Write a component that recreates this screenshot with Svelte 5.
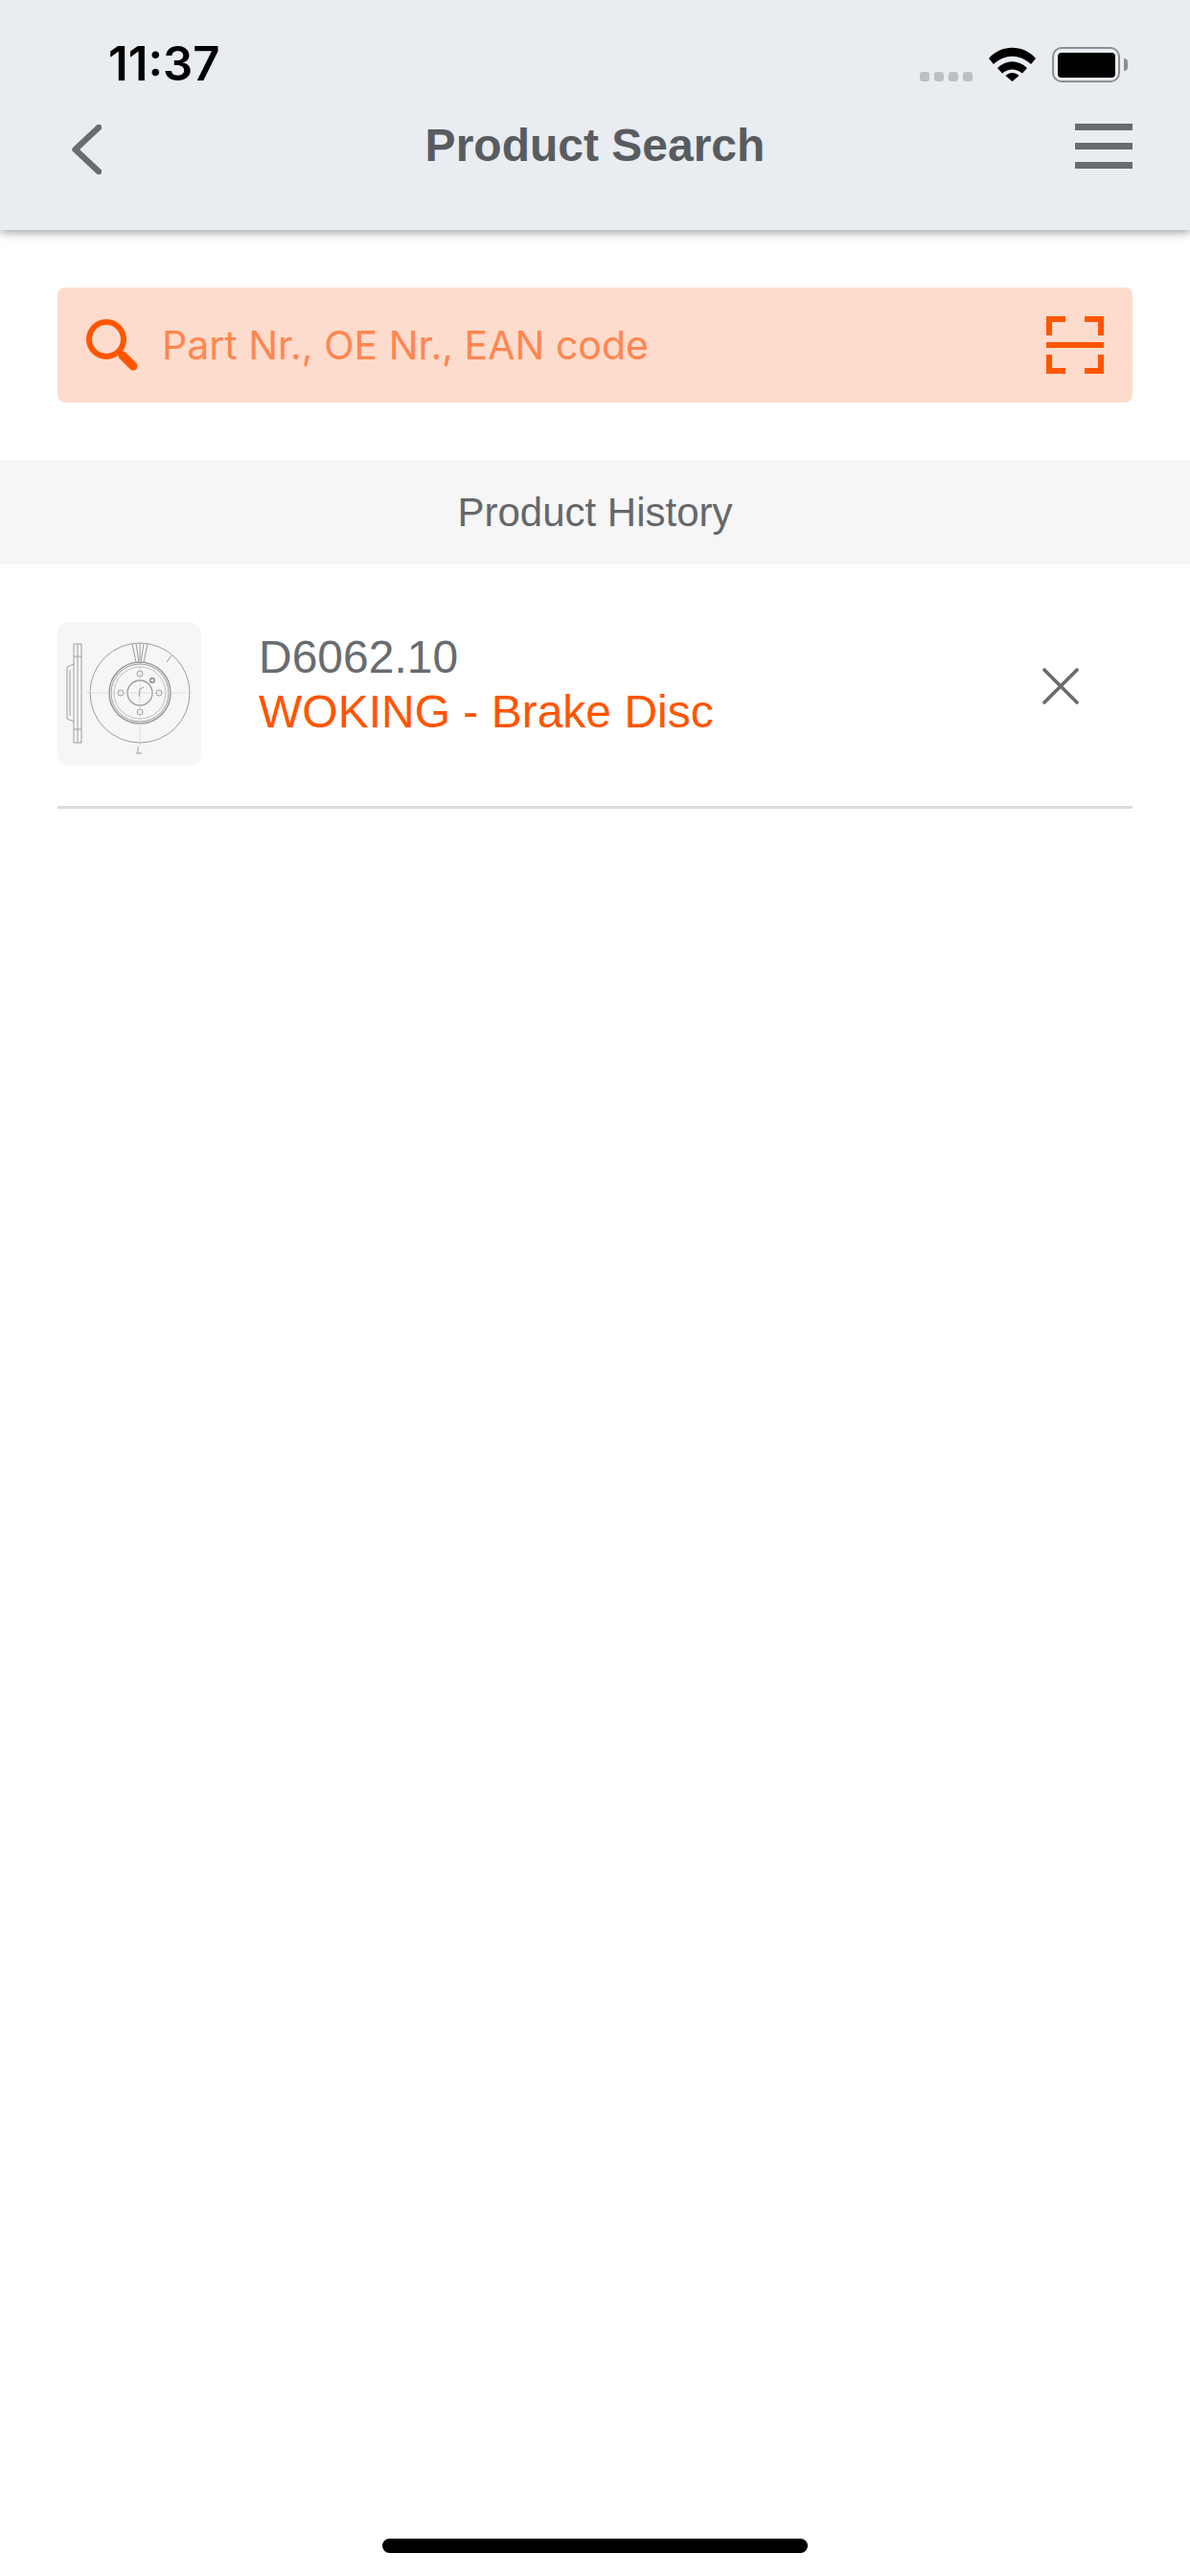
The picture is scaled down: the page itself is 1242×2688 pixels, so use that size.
<script lang="ts">
	const history = [{ code: 'D6062.10', name: 'WOKING - Brake Disc' }];
</script>

<div class="page">
	<header class="top">
		<div class="status">
			<span class="time">11:37</span>
			<div class="status-icons">
				<div class="signal"><i></i><i></i><i></i><i></i></div>
				<svg class="wifi" width="49" height="36" viewBox="0 0 49 36">
					<path d="M0 12 C13 -3 36 -3 49 12 L44 18 C32 7 17 7 5 18 Z" fill="#000" />
					<path d="M9 22 C18 13 31 13 40 22 L35 27.5 C28 22 21 22 14 27.5 Z" fill="#000" />
					<path d="M17.5 30 C21.5 26 27.5 26 31.5 30 L24.5 36 Z" fill="#000" />
				</svg>
				<div class="battery"><div class="battery-fill"></div></div>
				<div class="battery-cap"></div>
			</div>
		</div>
		<nav class="nav">
			<svg class="back" width="31" height="52" viewBox="0 0 31 52">
				<path d="M28 3 L3.5 26 L28 49" fill="none" stroke="#696c6f" stroke-width="6.5" stroke-linecap="round" stroke-linejoin="round" />
			</svg>
			<h1>Product Search</h1>
			<div class="menu"><i></i><i></i><i></i></div>
		</nav>
	</header>

	<div class="search-wrap">
		<div class="search">
			<svg class="lens" width="54" height="54" viewBox="0 0 54 54">
				<circle cx="21" cy="21" r="18" fill="none" stroke="#ff5500" stroke-width="6" />
				<path d="M33 33 L38 38" fill="none" stroke="#ff5500" stroke-width="5" />
				<path d="M38 38 L49 49" fill="none" stroke="#ff5500" stroke-width="9" stroke-linecap="round" />
			</svg>
			<span class="placeholder">Part Nr., OE Nr., EAN code</span>
			<svg class="scan" width="60" height="60" viewBox="0 0 60 60">
				<path d="M3 20 V3 H20 M40 3 H57 V20 M3 40 V57 H20 M40 57 H57 V40" fill="none" stroke="#ff5500" stroke-width="6" />
				<rect x="0" y="27" width="60" height="6" fill="#ff5500" />
			</svg>
		</div>
	</div>

	<div class="band">Product History</div>

	<ul class="list">
		{#each history as item}
			<li class="row">
				<div class="thumb">
					<svg width="150" height="150" viewBox="0 0 150 150">
						<g fill="none" stroke="#9c9c9c" stroke-width="1">
							<circle cx="86" cy="74" r="52" />
							<circle cx="86" cy="74" r="32" stroke-width="1.5" />
							<circle cx="86" cy="74" r="30" />
							<circle cx="86" cy="74" r="27" stroke-width="0.6" />
							<circle cx="86" cy="74" r="13" stroke-width="1.3" />
							<circle cx="86" cy="54" r="3" />
							<circle cx="86" cy="94" r="3" />
							<circle cx="66" cy="74" r="3" />
							<circle cx="106" cy="74" r="3" />
							<circle cx="99" cy="61" r="2.3" stroke="#777" stroke-width="1.2" />
							<path d="M78 23 L82 42 M86 22 V44 M94 23 L90 42 M82 23 L85 42 M90 23 L87 42" />
							<path d="M30 74 H140 M86 20 V130" stroke="#c8c8c8" stroke-width="0.5" />
							<path d="M86 70 L85 78 M86 70 L90 68" />
							<path d="M17 23 H25 V126 H17 Z M21 23 V126 M17 36 H25 M17 112 H25" />
							<path d="M17 44 L10 47 V101 L17 104 M13 50 V98" />
							<path d="M84 130 V137 M82 137 H88 M119 35 L114 42" />
						</g>
					</svg>
				</div>
				<div class="info">
					<div class="code">{item.code}</div>
					<div class="name">{item.name}</div>
				</div>
				<svg class="close" width="38" height="38" viewBox="0 0 38 38">
					<path d="M2 2 L36 36 M36 2 L2 36" fill="none" stroke="#696c6f" stroke-width="3.6" stroke-linecap="round" />
				</svg>
			</li>
		{/each}
	</ul>

	<div class="home-bar"></div>
</div>

<style>
	:global(body) {
		margin: 0;
		background: #fff;
	}

	.page {
		position: relative;
		width: 1242px;
		height: 2688px;
		overflow: hidden;
		font-family: 'Liberation Sans', Arial, sans-serif;
		background: #fff;
	}

	.top {
		height: 240px;
		box-sizing: border-box;
		padding-top: 42px;
		background: #e9ecf1;
		box-shadow: 0 3px 9px rgba(0, 0, 0, 0.35);
	}

	.status {
		display: flex;
		justify-content: space-between;
		align-items: flex-start;
		height: 50px;
		padding: 0 65px 0 113px;
	}

	.time {
		font-family: Inter, sans-serif;
		font-size: 49px;
		font-weight: 600;
		line-height: 50px;
		color: #000;
	}

	.status-icons {
		display: flex;
		align-items: flex-start;
		margin-top: 7px;
	}

	.signal {
		display: flex;
		gap: 5px;
		margin: 26px 17px 0 0;
	}

	.signal i {
		width: 10px;
		height: 10px;
		border-radius: 3px;
		background: #bcbfc4;
	}

	.wifi {
		margin-right: 17px;
	}

	.battery {
		width: 71px;
		height: 37px;
		box-sizing: border-box;
		padding: 3.5px;
		border: 2.5px solid #8b8e92;
		border-radius: 10px;
	}

	.battery-fill {
		height: 100%;
		border-radius: 4px;
		background: #000;
	}

	.battery-cap {
		width: 4px;
		height: 13px;
		margin: 12px 0 0 4px;
		border-radius: 0 4px 4px 0;
		background: #8b8e92;
	}

	.nav {
		display: grid;
		grid-template-columns: 1fr auto 1fr;
		align-items: center;
		height: 64px;
		margin-top: 28px;
		padding: 0 60px;
	}

	.back {
		margin: 8px 0 0 15px;
	}

	h1 {
		margin: 0 0 2px;
		font-size: 48px;
		font-weight: 700;
		color: #585c60;
	}

	.menu {
		display: flex;
		flex-direction: column;
		gap: 13px;
		justify-self: end;
		width: 60px;
	}

	.menu i {
		height: 7px;
		background: #696c6f;
	}

	.search-wrap {
		padding: 60px;
	}

	.search {
		display: flex;
		align-items: center;
		height: 120px;
		padding: 0 30px;
		border-radius: 8px;
		background: #fedccd;
	}

	.placeholder {
		flex: 1;
		margin-left: 25px;
		font-family: Inter, sans-serif;
		font-size: 41px;
		color: #ff8650;
	}

	.band {
		height: 109px;
		line-height: 110px;
		text-align: center;
		font-size: 42px;
		color: #65686b;
		background: #f6f6f6;
	}

	.list {
		margin: 0;
		padding: 0 60px;
		list-style: none;
	}

	.row {
		display: flex;
		align-items: flex-start;
		height: 255px;
		box-sizing: border-box;
		padding-top: 60px;
		border-bottom: 3px solid #dcdcdc;
	}

	.thumb {
		flex: none;
		width: 150px;
		height: 150px;
		border-radius: 12px;
		background: #f6f6f6;
	}

	.thumb svg {
		display: block;
		filter: blur(0.6px);
	}

	.info {
		flex: 1;
		margin-left: 60px;
		padding-top: 8px;
		font-size: 48px;
		line-height: 57px;
	}

	.code {
		color: #696c6f;
	}

	.name {
		color: #ff5500;
	}

	.close {
		margin: 48px 56px 0 0;
	}

	.home-bar {
		position: absolute;
		left: 399px;
		top: 2649px;
		width: 444px;
		height: 15px;
		border-radius: 8px;
		background: #000;
	}
</style>
